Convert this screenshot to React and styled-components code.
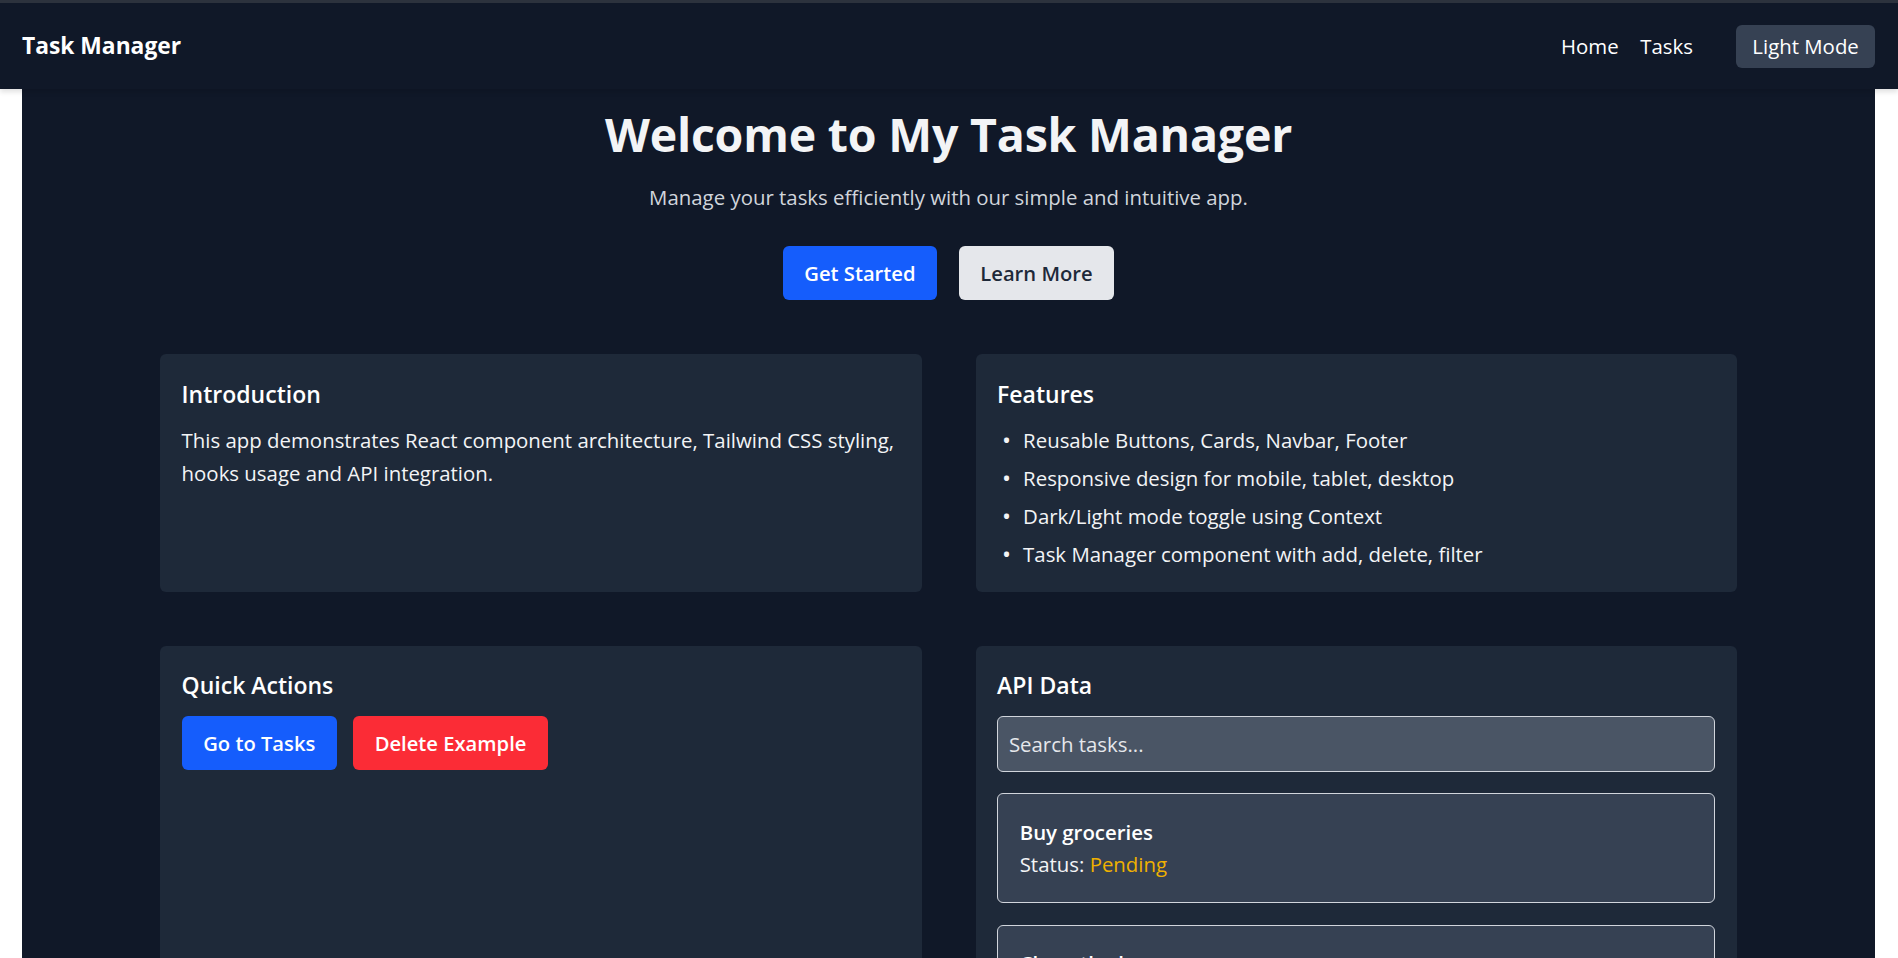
import React from "react";
import styled, { createGlobalStyle } from "styled-components";

const GlobalStyle = createGlobalStyle`
  body {
    margin: 0;
    background: #ffffff;
    font-family: "Open Sans", "Noto Sans", sans-serif;
    color: #f3f4f6;
  }
  * {
    box-sizing: border-box;
  }
`;

const Nav = styled.nav`
  position: relative;
  z-index: 1;
  display: flex;
  align-items: center;
  justify-content: space-between;
  padding: 21.6px 23px 21.6px 22px;
  background: #101828;
  border-top: 3px solid #2c323d;
  box-shadow: 0 3px 5px rgba(0, 0, 0, 0.12);
`;

const Logo = styled.div`
  font-size: 22.8px;
  line-height: 37.8px;
  font-weight: 700;
  color: #ffffff;
`;

const NavLinks = styled.div`
  display: flex;
  align-items: center;
  gap: 21.6px;
`;

const NavLink = styled.a`
  font-size: 20.4px;
  line-height: 32.4px;
  color: #ffffff;
  text-decoration: none;
`;

const ModeButton = styled.button`
  margin-left: 21.6px;
  padding: 5.4px 16.2px;
  border: none;
  border-radius: 6px;
  background: #364153;
  color: #ffffff;
  font-family: inherit;
  font-size: 20.4px;
  line-height: 32.4px;
`;

const Main = styled.main`
  margin: 0 23px 0 22px;
  padding: 21.6px;
  min-height: 869px;
  background: #101828;
`;

const Hero = styled.section`
  text-align: center;
`;

const Title = styled.h1`
  margin: -4px 0 20.2px;
  font-size: 46.5px;
  line-height: 54px;
  font-weight: 700;
  letter-spacing: -0.2px;
  color: #f3f4f6;
`;

const Subtitle = styled.p`
  margin: 0 0 32.4px;
  font-size: 20.4px;
  line-height: 32.4px;
  color: #d1d5dc;
`;

const ButtonRow = styled.div`
  display: flex;
  justify-content: ${(p) => (p.$center ? "center" : "flex-start")};
  gap: ${(p) => p.$gap || "21.6px"};
`;

const colors = {
  primary: { bg: "#155dfc", fg: "#ffffff" },
  secondary: { bg: "#e5e7eb", fg: "#1e2939" },
  danger: { bg: "#fb2c36", fg: "#ffffff" },
};

const Button = styled.button`
  padding: 10.8px 21.6px;
  border: none;
  border-radius: 6px;
  background: ${(p) => colors[p.$variant].bg};
  color: ${(p) => colors[p.$variant].fg};
  font-family: inherit;
  font-size: 20.2px;
  line-height: 32.4px;
  font-weight: 600;
`;

const Grid = styled.div`
  max-width: 1577px;
  margin: 54px auto 0;
  display: grid;
  grid-template-columns: 1fr 1fr;
  gap: 54px;
`;

const Card = styled.section`
  padding: 21.6px;
  border-radius: 6px;
  background: #1e2939;
`;

const CardTitle = styled.h2`
  margin: 0 0 10.8px;
  font-size: 23px;
  line-height: 37.8px;
  font-weight: 600;
  color: #ffffff;
`;

const Text = styled.p`
  margin: 0;
  font-size: 20.4px;
  line-height: 32.4px;
  color: #f3f4f6;
`;

const List = styled.ul`
  margin: 0;
  padding: 0;
  list-style: none;
  display: flex;
  flex-direction: column;
  gap: 5.4px;
`;

const ListItem = styled.li`
  display: flex;
  font-size: 20.4px;
  line-height: 32.4px;
  color: #f3f4f6;

  &::before {
    content: "•";
    flex-shrink: 0;
    width: 21px;
    padding-left: 5px;
    font-size: 24px;
  }
`;

const Search = styled.input`
  display: block;
  width: 100%;
  margin-bottom: 21.6px;
  padding: 10.8px;
  border: 1px solid #d1d5dc;
  border-radius: 6px;
  background: #4a5565;
  color: #ffffff;
  font-family: inherit;
  font-size: 20.4px;
  line-height: 32.4px;
  outline: none;

  &::placeholder {
    color: #e5e7eb;
  }
`;

const TaskList = styled.div`
  display: flex;
  flex-direction: column;
  gap: 21.6px;
`;

const TaskCard = styled.div`
  padding: 21.6px;
  border: 1px solid #d1d5dc;
  border-radius: 6px;
  background: #364153;
  font-size: 20.4px;
  line-height: 32.4px;
`;

const TaskName = styled.div`
  font-weight: 600;
  color: #ffffff;
`;

const Status = styled.span`
  color: ${(p) => (p.$done ? "#00c951" : "#f0b100")};
`;

const features = [
  "Reusable Buttons, Cards, Navbar, Footer",
  "Responsive design for mobile, tablet, desktop",
  "Dark/Light mode toggle using Context",
  "Task Manager component with add, delete, filter",
];

const tasks = [
  { id: 1, title: "Buy groceries", done: false },
  { id: 2, title: "Clean the house", done: true },
  { id: 3, title: "Finish project", done: false },
];

export default function App() {
  return (
    <>
      <GlobalStyle />
      <Nav>
        <Logo>Task Manager</Logo>
        <NavLinks>
          <NavLink href="#">Home</NavLink>
          <NavLink href="#">Tasks</NavLink>
          <ModeButton>Light Mode</ModeButton>
        </NavLinks>
      </Nav>
      <Main>
        <Hero>
          <Title>Welcome to My Task Manager</Title>
          <Subtitle>Manage your tasks efficiently with our simple and intuitive app.</Subtitle>
          <ButtonRow $center>
            <Button $variant="primary">Get Started</Button>
            <Button $variant="secondary">Learn More</Button>
          </ButtonRow>
        </Hero>
        <Grid>
          <Card>
            <CardTitle>Introduction</CardTitle>
            <Text>
              This app demonstrates React component architecture, Tailwind CSS styling, hooks usage and API
              integration.
            </Text>
          </Card>
          <Card>
            <CardTitle>Features</CardTitle>
            <List>
              {features.map((f) => (
                <ListItem key={f}>{f}</ListItem>
              ))}
            </List>
          </Card>
          <Card>
            <CardTitle>Quick Actions</CardTitle>
            <ButtonRow $gap="16.2px">
              <Button $variant="primary">Go to Tasks</Button>
              <Button $variant="danger">Delete Example</Button>
            </ButtonRow>
          </Card>
          <Card>
            <CardTitle>API Data</CardTitle>
            <Search placeholder="Search tasks..." />
            <TaskList>
              {tasks.map((t) => (
                <TaskCard key={t.id}>
                  <TaskName>{t.title}</TaskName>
                  <div>
                    Status: <Status $done={t.done}>{t.done ? "Completed" : "Pending"}</Status>
                  </div>
                </TaskCard>
              ))}
            </TaskList>
          </Card>
        </Grid>
      </Main>
    </>
  );
}
